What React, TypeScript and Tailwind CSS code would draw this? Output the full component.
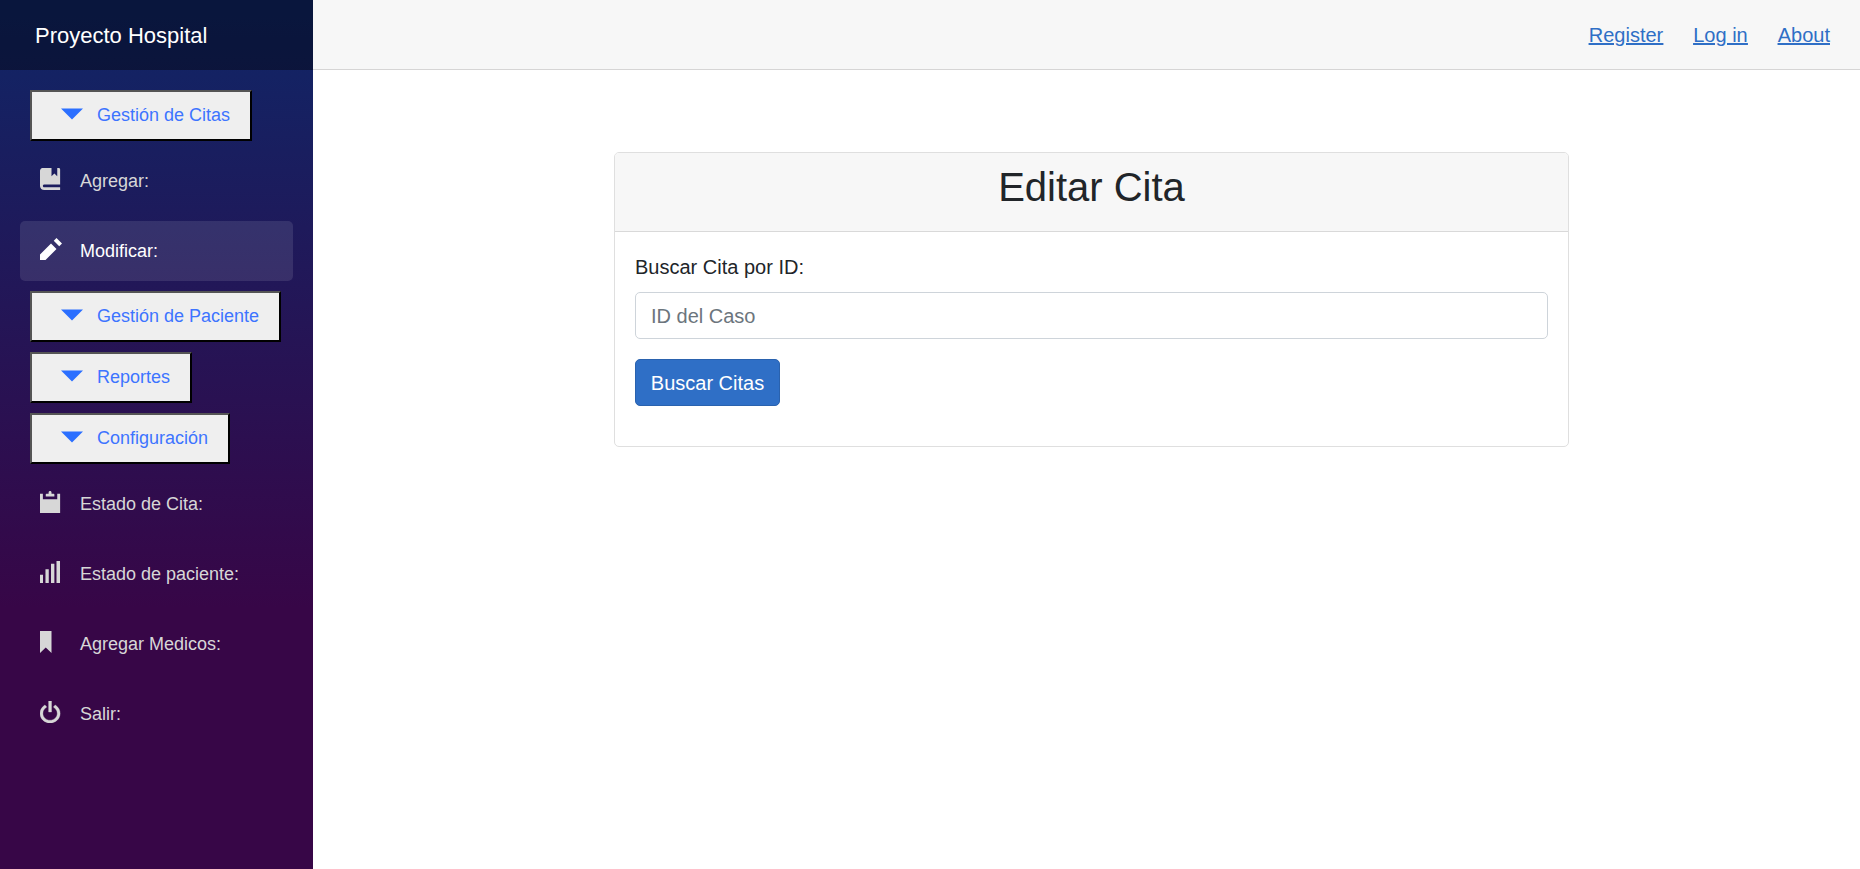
import type { ReactNode } from "react";

const icons = {
  book: "M1 0c-.07 0-.13.01-.19.03-.39.08-.7.39-.78.78-.03.06-.03.12-.03.19v5.5c0 .83.67 1.5 1.5 1.5h5.5v-1h-5.5c-.28 0-.5-.22-.5-.5s.22-.5.5-.5h5.5v-5.5c0-.28-.22-.5-.5-.5h-.5v3l-1-1-1 1v-3h-3z",
  pencil: "M6 0l-1 1 2 2 1-1-2-2zm-2 2l-4 4v2h2l4-4-2-2z",
  clipboard:
    "M3.5 0c-.28 0-.5.22-.5.5v.5h-.75c-.14 0-.25.11-.25.25v.75h3v-.75c0-.14-.11-.25-.25-.25h-.75v-.5c0-.28-.22-.5-.5-.5zm-3.5 1v7h7v-7h-1v2h-5v-2h-1z",
  signal: "M5.74 0v8h1.22v-8h-1.22zm-1.91 1v7h1.17v-7h-1.17zm-1.93 2v5h1.15v-5h-1.15zm-1.9 2v3h1.05v-3h-1.05z",
  bookmark: "M0 0v8l2-2 2 2v-8h-4z",
  power:
    "M3 0v4h1v-4h-1zm-1.28 1.44l-.38.31c-.81.64-1.34 1.64-1.34 2.75 0 1.93 1.57 3.5 3.5 3.5s3.5-1.57 3.5-3.5c0-1.11-.53-2.11-1.34-2.75l-.38-.31-.63.78.38.31c.58.46.97 1.17.97 1.97 0 1.39-1.11 2.5-2.5 2.5s-2.5-1.11-2.5-2.5c0-.8.36-1.51.94-1.97l.41-.31-.63-.78z",
  caret: "M0 2l4 4 4-4h-8z",
};

function Icon({ name, className }: { name: keyof typeof icons; className: string }) {
  return (
    <svg
      viewBox="0 0 8 8"
      preserveAspectRatio="none"
      fill="currentColor"
      stroke={name === "power" ? "currentColor" : "none"}
      strokeWidth={0.12}
      className={`h-[22px] shrink-0 ${className}`}
    >
      <path d={icons[name]} />
    </svg>
  );
}

function NavLink({ icon, active, children }: { icon: keyof typeof icons; active?: boolean; children: ReactNode }) {
  return (
    <a
      href="#"
      className={`mx-5 flex h-[60px] items-center rounded-[5px] pl-5 ${
        active ? "bg-[#ffffff1b] text-white" : "text-[#d7d7d7]"
      }`}
    >
      <Icon
        name={icon}
        className={icon === "pencil" ? "mr-[18px] mb-1 w-[22px]" : "mr-[17px] mb-1 w-[23px]"}
      />
      {children}
    </a>
  );
}

function MenuButton({ width, children }: { width: string; children: ReactNode }) {
  return (
    <button
      className={`ml-[30px] flex h-[51px] items-center border-2 border-t-[#555] border-r-black border-b-black border-l-[#555] bg-[#efefef] pb-0.5 pl-[29px] whitespace-nowrap text-[#3d74ff] ${width}`}
    >
      <Icon name="caret" className="mr-3.5 mb-0.5 w-[22px] text-[#2b6fff]" />
      {children}
    </button>
  );
}

export default function App() {
  return (
    <div className="flex h-[869px] bg-white font-['Liberation_Sans',Arial,sans-serif] text-xl leading-[30px] text-[#212529]">
      <aside className="w-[313px] shrink-0 bg-[linear-gradient(180deg,rgb(15,38,103)_0%,#370647_70%)]">
        <div className="flex h-[70px] items-center bg-black/40 pt-0.5 pl-[35px] text-[22px] text-white">
          Proyecto Hospital
        </div>
        <nav className="flex flex-col items-stretch gap-2.5 pt-5 text-lg">
          <MenuButton width="w-[222px]">Gestión de Citas</MenuButton>
          <NavLink icon="book">Agregar:</NavLink>
          <NavLink icon="pencil" active>
            Modificar:
          </NavLink>
          <MenuButton width="w-[251px]">Gestión de Paciente</MenuButton>
          <MenuButton width="w-[162px]">Reportes</MenuButton>
          <MenuButton width="w-[200px]">Configuración</MenuButton>
          <NavLink icon="clipboard">Estado de Cita:</NavLink>
          <NavLink icon="signal">Estado de paciente:</NavLink>
          <NavLink icon="bookmark">Agregar Medicos:</NavLink>
          <NavLink icon="power">Salir:</NavLink>
        </nav>
      </aside>
      <main className="min-w-0 flex-1">
        <header className="flex h-[70px] items-center justify-end gap-[30px] border-b border-[#d6d5d5] bg-[#f7f7f7] pr-[30px] text-[#2f6fc6] underline decoration-2 underline-offset-1">
          <a href="#">Register</a>
          <a href="#">Log in</a>
          <a href="#">About</a>
        </header>
        <section className="mt-[82px] ml-[301px] h-[295px] w-[955px] rounded-[5px] border border-[#dfdfdf] bg-white">
          <div className="h-[79px] rounded-t-[4px] border-b border-[#d9d9d9] bg-[#f7f7f7] pt-2.5 text-center">
            <h1 className="text-[40px] leading-[48px]">Editar Cita</h1>
          </div>
          <form className="flex flex-col items-start p-5">
            <label htmlFor="case-id" className="mb-2.5">
              Buscar Cita por ID:
            </label>
            <input
              id="case-id"
              placeholder="ID del Caso"
              className="h-[47px] w-full rounded-[5px] border border-[#ced4da] px-[15px] pt-0.5 placeholder:text-[#6c757d]"
            />
            <button
              type="button"
              className="mt-5 h-[47px] w-[145px] rounded-[5px] border border-[#2a62ae] bg-[#2f6fc6] text-white"
            >
              Buscar Citas
            </button>
          </form>
        </section>
      </main>
    </div>
  );
}
